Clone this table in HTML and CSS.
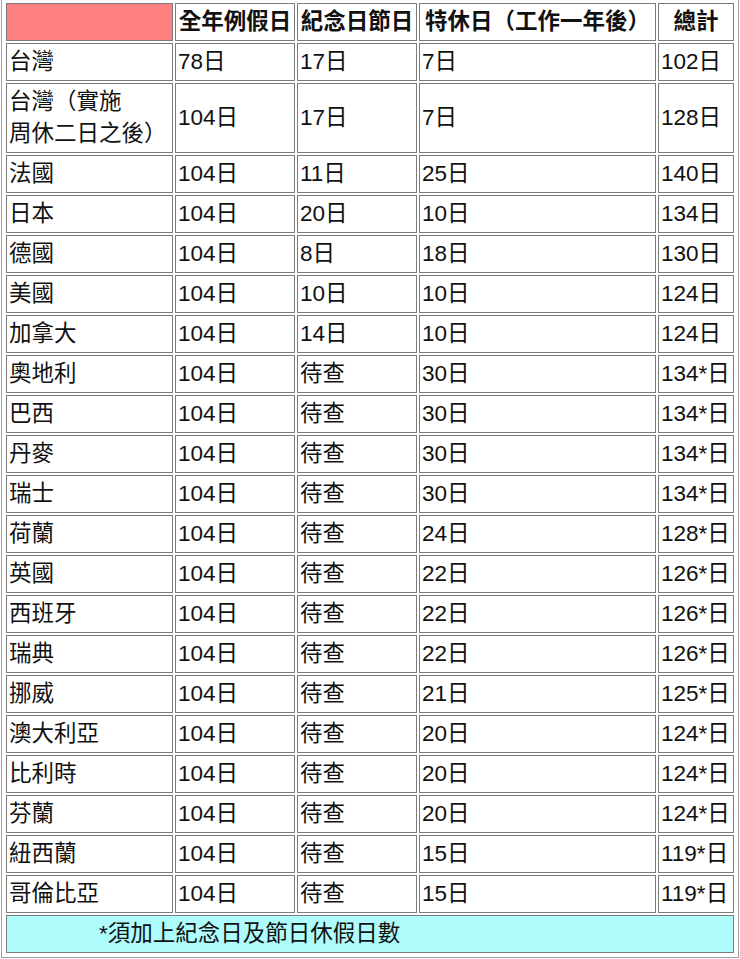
FILE: index.html
```html
<!DOCTYPE html>
<html lang="zh-Hant">
<head>
<meta charset="utf-8">
<title>各國休假日數比較</title>
<link rel="stylesheet" href="styles.css">
</head>
<body>
<table class="holidays">
  <colgroup>
    <col class="c-country">
    <col class="c-weekend">
    <col class="c-memorial">
    <col class="c-annual">
    <col class="c-total">
  </colgroup>
  <thead>
    <tr>
      <th class="corner"></th>
      <th>全年例假日</th>
      <th>紀念日節日</th>
      <th>特休日（工作一年後）</th>
      <th>總計</th>
    </tr>
  </thead>
  <tbody>
    <tr><td>台灣</td><td>78日</td><td>17日</td><td>7日</td><td>102日</td></tr>
    <tr><td>台灣（實施<br>周休二日之後）</td><td>104日</td><td>17日</td><td>7日</td><td>128日</td></tr>
    <tr><td>法國</td><td>104日</td><td>11日</td><td>25日</td><td>140日</td></tr>
    <tr><td>日本</td><td>104日</td><td>20日</td><td>10日</td><td>134日</td></tr>
    <tr><td>德國</td><td>104日</td><td>8日</td><td>18日</td><td>130日</td></tr>
    <tr><td>美國</td><td>104日</td><td>10日</td><td>10日</td><td>124日</td></tr>
    <tr><td>加拿大</td><td>104日</td><td>14日</td><td>10日</td><td>124日</td></tr>
    <tr><td>奧地利</td><td>104日</td><td>待查</td><td>30日</td><td>134*日</td></tr>
    <tr><td>巴西</td><td>104日</td><td>待查</td><td>30日</td><td>134*日</td></tr>
    <tr><td>丹麥</td><td>104日</td><td>待查</td><td>30日</td><td>134*日</td></tr>
    <tr><td>瑞士</td><td>104日</td><td>待查</td><td>30日</td><td>134*日</td></tr>
    <tr><td>荷蘭</td><td>104日</td><td>待查</td><td>24日</td><td>128*日</td></tr>
    <tr><td>英國</td><td>104日</td><td>待查</td><td>22日</td><td>126*日</td></tr>
    <tr><td>西班牙</td><td>104日</td><td>待查</td><td>22日</td><td>126*日</td></tr>
    <tr><td>瑞典</td><td>104日</td><td>待查</td><td>22日</td><td>126*日</td></tr>
    <tr><td>挪威</td><td>104日</td><td>待查</td><td>21日</td><td>125*日</td></tr>
    <tr><td>澳大利亞</td><td>104日</td><td>待查</td><td>20日</td><td>124*日</td></tr>
    <tr><td>比利時</td><td>104日</td><td>待查</td><td>20日</td><td>124*日</td></tr>
    <tr><td>芬蘭</td><td>104日</td><td>待查</td><td>20日</td><td>124*日</td></tr>
    <tr><td>紐西蘭</td><td>104日</td><td>待查</td><td>15日</td><td>119*日</td></tr>
    <tr><td>哥倫比亞</td><td>104日</td><td>待查</td><td>15日</td><td>119*日</td></tr>
  </tbody>
  <tfoot>
    <tr><td class="note" colspan="5">*須加上紀念日及節日休假日數</td></tr>
  </tfoot>
</table>
</body>
</html>
```

FILE: styles.css
```css
html, body {
  margin: 0;
  padding: 0;
  background: #ffffff;
}

body {
  font-family: "Liberation Sans", "Noto Sans CJK TC", "Noto Sans CJK SC", sans-serif;
  font-size: 22.5px;
  color: #111111;
}

.holidays {
  margin: -2px 0 0 1px;
  width: 738px;
  table-layout: fixed;
  border-collapse: separate;
  border-spacing: 2px;
  padding: 2px;
  border: 1px solid #a0a0a0;
}

.c-country { width: 167px; }
.c-weekend { width: 120px; }
.c-memorial { width: 120px; }
.c-annual { width: 237px; }
.c-total { width: 76px; }

.holidays th,
.holidays td {
  border: 1px solid #7c7c7c;
  padding: 2px 2px;
  line-height: 32px;
  vertical-align: middle;
  white-space: nowrap;
  overflow: hidden;
}

.holidays th {
  font-weight: bold;
  text-align: center;
  color: #111111;
}

.holidays td {
  text-align: left;
  font-weight: normal;
}

.holidays .corner {
  background: #ff8080;
}

.holidays .note {
  background: #affcfc;
  padding-left: 92px;
}
```
